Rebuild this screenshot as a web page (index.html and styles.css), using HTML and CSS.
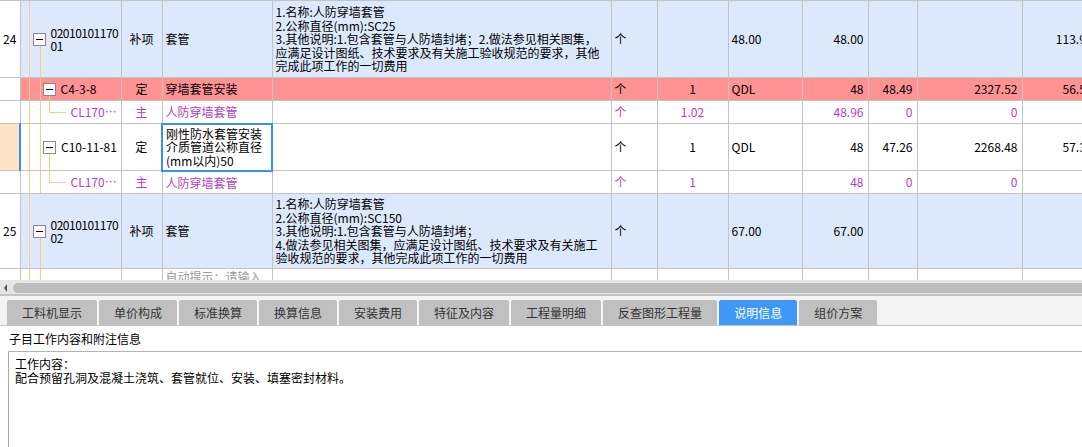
FILE: index.html
```html
<!DOCTYPE html>
<html lang="zh-CN">
  <head>
    <meta charset="UTF-8" />
    <title>分部分项 - 说明信息</title>
    <link rel="stylesheet" href="styles.css">
  </head>
  <body>
    <div class="grid">
      <table class="bill">
        <colgroup>
          <col class="c-no">
          <col class="c-code">
          <col class="c-type">
          <col class="c-name">
          <col class="c-desc">
          <col class="c-unit">
          <col class="c-ratio">
          <col class="c-expr">
          <col class="c-qty">
          <col class="c-price">
          <col class="c-total">
          <col class="c-more">
        </colgroup>

        <!-- 清单项 24 -->
        <tr class="item h77">
          <td class="no">24</td>
          <td class="tree l1">
            <div class="node"><span class="toggle"></span><span class="code">02010101170<br>01</span></div>
          </td>
          <td class="mid">补项</td>
          <td>套管</td>
          <td class="desc">1.名称:人防穿墙套管<br>2.公称直径(mm):SC25<br>3.其他说明:1.包含套管与人防墙封堵；2.做法参见相关图集，<br>应满足设计图纸、技术要求及有关施工验收规范的要求，其他<br>完成此项工作的一切费用</td>
          <td>个</td>
          <td class="mid"></td>
          <td>48.00</td>
          <td class="num">48.00</td>
          <td class="num"></td>
          <td class="num"></td>
          <td class="num">113.94</td>
        </tr>
        <tr class="quota red h23">
          <td class="no"></td>
          <td class="tree l2">
            <div class="node"><span class="toggle"></span><span>C4-3-8</span></div>
          </td>
          <td class="mid">定</td>
          <td>穿墙套管安装</td>
          <td></td>
          <td>个</td>
          <td class="mid">1</td>
          <td>QDL</td>
          <td class="num">48</td>
          <td class="num">48.49</td>
          <td class="num">2327.52</td>
          <td class="num">56.54</td>
        </tr>
        <tr class="sub h23">
          <td class="no"></td>
          <td class="tree l3"><div class="node">CL170…</div></td>
          <td class="mid">主</td>
          <td>人防穿墙套管</td>
          <td></td>
          <td>个</td>
          <td class="mid">1.02</td>
          <td></td>
          <td class="num">48.96</td>
          <td class="num">0</td>
          <td class="num">0</td>
          <td class="num"></td>
        </tr>
        <tr class="quota sel h47">
          <td class="no"></td>
          <td class="tree l2">
            <div class="node"><span class="toggle"></span><span>C10-11-81</span></div>
          </td>
          <td class="mid">定</td>
          <td class="editing">刚性防水套管安装<br>介质管道公称直径<br>(mm以内)50</td>
          <td></td>
          <td>个</td>
          <td class="mid">1</td>
          <td>QDL</td>
          <td class="num">48</td>
          <td class="num">47.26</td>
          <td class="num">2268.48</td>
          <td class="num">57.31</td>
        </tr>
        <tr class="sub h23">
          <td class="no"></td>
          <td class="tree l3"><div class="node">CL170…</div></td>
          <td class="mid">主</td>
          <td>人防穿墙套管</td>
          <td></td>
          <td>个</td>
          <td class="mid">1</td>
          <td></td>
          <td class="num">48</td>
          <td class="num">0</td>
          <td class="num">0</td>
          <td class="num"></td>
        </tr>

        <!-- 清单项 25 -->
        <tr class="item h75">
          <td class="no">25</td>
          <td class="tree l1">
            <div class="node"><span class="toggle"></span><span class="code">02010101170<br>02</span></div>
          </td>
          <td class="mid">补项</td>
          <td>套管</td>
          <td class="desc">1.名称:人防穿墙套管<br>2.公称直径(mm):SC150<br>3.其他说明:1.包含套管与人防墙封堵；<br>4.做法参见相关图集，应满足设计图纸、技术要求及有关施工<br>验收规范的要求，其他完成此项工作的一切费用</td>
          <td>个</td>
          <td class="mid"></td>
          <td>67.00</td>
          <td class="num">67.00</td>
          <td class="num"></td>
          <td class="num"></td>
          <td class="num"></td>
        </tr>
        <tr class="new h23">
          <td class="no"></td>
          <td class="tree l0"></td>
          <td></td>
          <td class="hint">自动提示：请输入</td>
          <td></td>
          <td></td>
          <td></td>
          <td></td>
          <td></td>
          <td></td>
          <td></td>
          <td></td>
        </tr>
      </table>
    </div>

    <div class="hscroll">
      <span class="arrow-left"></span>
      <div class="thumb"></div>
    </div>

    <div class="tabbar">
      <div class="tab">工料机显示</div>
      <div class="tab">单价构成</div>
      <div class="tab">标准换算</div>
      <div class="tab">换算信息</div>
      <div class="tab">安装费用</div>
      <div class="tab">特征及内容</div>
      <div class="tab">工程量明细</div>
      <div class="tab">反查图形工程量</div>
      <div class="tab active">说明信息</div>
      <div class="tab">组价方案</div>
    </div>

    <div class="note-title">子目工作内容和附注信息</div>
    <div class="note-box">
      工作内容：<br>
      配合预留孔洞及混凝土浇筑、套管就位、安装、填塞密封材料。
    </div>
  </body>
</html>
```

FILE: styles.css
```css
/* Reset */
html,
body {
  margin: 0;
  padding: 0;
}

body {
  width: 1082px;
  height: 447px;
  overflow: hidden;
  background-color: #fff;
  color: #000;
  font-family: "Noto Sans CJK SC", sans-serif;
  font-size: 12px;
}

/* Grid of bill items */
.grid {
  height: 280px;
  overflow: hidden;
}

.bill {
  border-collapse: collapse;
  table-layout: fixed;
  width: 1097px;
}

.c-no { width: 20px; }
.c-code { width: 101px; }
.c-type { width: 41px; }
.c-name { width: 110px; }
.c-desc { width: 339px; }
.c-unit { width: 46px; }
.c-ratio { width: 71px; }
.c-expr { width: 74px; }
.c-qty { width: 66px; }
.c-price { width: 49px; }
.c-total { width: 105px; }
.c-more { width: 75px; }

.bill td {
  border: 1px solid #c3c3c3;
  padding: 0 3px;
  white-space: nowrap;
  overflow: hidden;
  vertical-align: middle;
  line-height: 13.5px;
}

.bill td:first-child {
  border-left: none;
}

.h77 { height: 77px; }
.h75 { height: 75px; }
.h47 { height: 47px; }
.h23 { height: 23px; }

.bill .no {
  text-align: center;
  padding: 0;
  background-color: #fff;
}

.bill .mid {
  text-align: center;
}

.bill .num {
  text-align: right;
  padding-right: 4px;
}

/* Row colours */
.item td {
  background-color: #dce8fb;
}

.red td {
  background-color: #ff9393;
}

.sub td {
  color: #b03fc4;
}

.sel .no {
  background-color: #fde4c6;
}

.sel .tree {
  border-left: 2px solid #3b8ff0;
}

.bill .editing {
  border: 2px solid #3b8ff0;
}

.bill .hint {
  color: #9a9a9a;
  vertical-align: top;
  padding-top: 1px;
}

/* Tree column with connector lines */
.bill .tree {
  padding: 0;
  --tl: #ffc987;
}

.tree.l0 {
  background:
    linear-gradient(var(--tl), var(--tl)) 8px 0 / 1px 100% no-repeat,
    linear-gradient(var(--tl), var(--tl)) 19px 0 / 1px 100% no-repeat;
}

.item .tree.l1 {
  background:
    linear-gradient(var(--tl), var(--tl)) 8px 0 / 1px 100% no-repeat,
    linear-gradient(transparent calc(50% + 6px), var(--tl) 0) 19px 0 / 1px 100% no-repeat,
    #dce8fb;
}

.tree.l2 {
  background:
    linear-gradient(var(--tl), var(--tl)) 8px 0 / 1px 100% no-repeat,
    linear-gradient(var(--tl), var(--tl)) 19px 0 / 1px 100% no-repeat,
    linear-gradient(transparent calc(50% + 6px), var(--tl) 0) 28px 0 / 1px 100% no-repeat;
}

.red .tree.l2 {
  background-color: #ff9393;
}

.tree.l3 {
  background:
    linear-gradient(var(--tl), var(--tl)) 8px 0 / 1px 100% no-repeat,
    linear-gradient(var(--tl), var(--tl)) 19px 0 / 1px 100% no-repeat,
    linear-gradient(var(--tl) 50%, transparent 0) 28px 0 / 1px 100% no-repeat,
    linear-gradient(var(--tl), var(--tl)) 28px 50% / 17px 1px no-repeat;
}

.node {
  display: flex;
  align-items: center;
  gap: 5px;
}

.l1 .node { padding-left: 12px; }
.l2 .node { padding-left: 22px; }
.l3 .node { padding-left: 50px; }

.code {
  letter-spacing: -0.5px;
}

.toggle {
  flex: none;
  width: 11px;
  height: 11px;
  border: 1px solid #888;
  background-color: #fff;
  display: flex;
  align-items: center;
  justify-content: center;
}

.toggle::before {
  content: "";
  width: 7px;
  height: 1px;
  background-color: #000;
}

/* Horizontal scrollbar */
.hscroll {
  height: 13px;
  background-color: #e6e6e6;
  display: flex;
  align-items: center;
  padding-top: 1px;
}

.arrow-left {
  width: 0;
  height: 0;
  margin: 0 6px 0 4px;
  border-top: 4px solid transparent;
  border-bottom: 4px solid transparent;
  border-right: 3px solid #555;
}

.thumb {
  flex: 1;
  height: 10px;
  border-radius: 5px 0 0 5px;
  background-color: #bdbdbd;
}

/* Tab strip */
.tabbar {
  height: 25px;
  padding: 4px 0 0 7px;
  display: flex;
  gap: 2px;
  background-color: #f3f3f3;
  border-top: 2px solid #c4c4c4;
  border-bottom: 1px solid #c4c4c4;
}

.tab {
  height: 25px;
  line-height: 25px;
  padding: 0 15px;
  background-color: #c0c0c0;
  border-radius: 2px 2px 0 0;
  color: #333;
}

.tab.active {
  background-color: #3f98f8;
  color: #fff;
}

/* Notes panel */
.note-title {
  height: 25px;
  line-height: 25px;
  padding-left: 9px;
}

.note-box {
  margin-left: 8px;
  height: 100px;
  padding: 5px 6px;
  line-height: 14px;
  border-top: 1px solid #b4b4b4;
  border-left: 1px solid #aaa;
}
```
